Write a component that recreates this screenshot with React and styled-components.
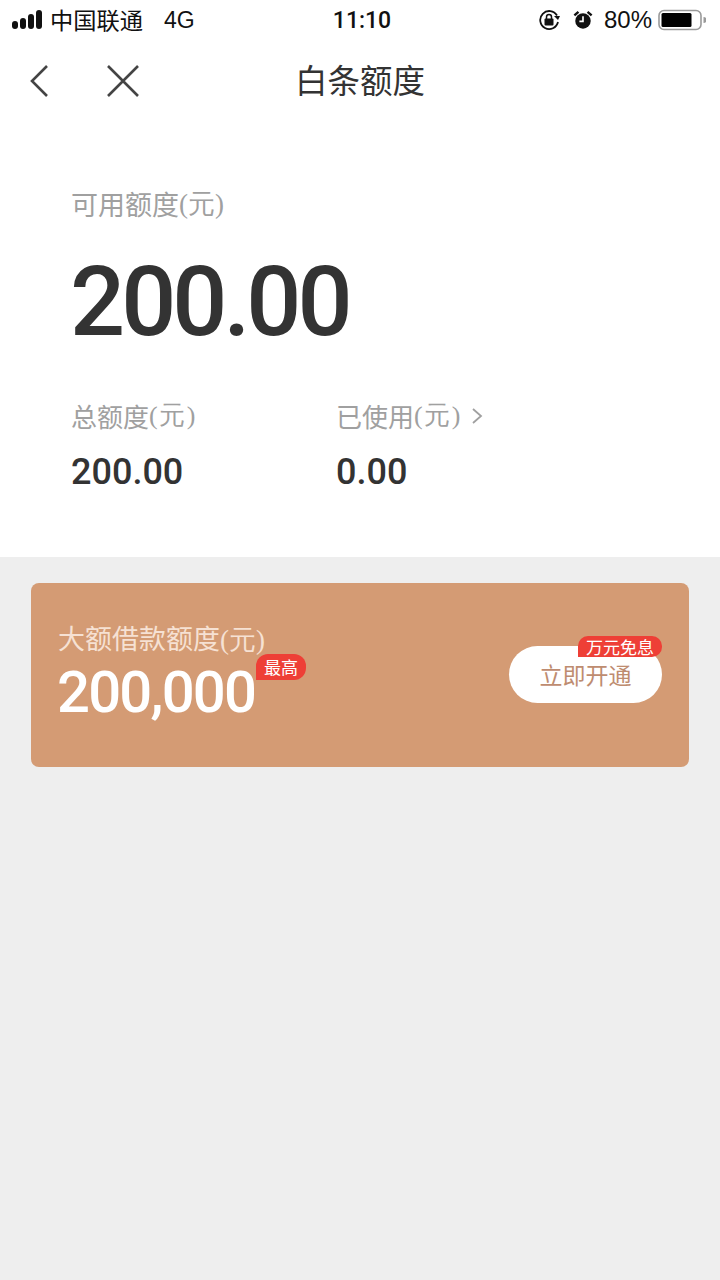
import React from "react";
import styled, { createGlobalStyle } from "styled-components";

const GlobalStyle = createGlobalStyle`
  html, body {
    margin: 0;
    padding: 0;
    background: #eeeeee;
  }
  body {
    font-family: "Noto Sans CJK SC", "Noto Sans", sans-serif;
  }
`;

const Page = styled.div`
  width: 720px;
  height: 1280px;
  background: #eeeeee;
  display: flex;
  flex-direction: column;
  overflow: hidden;
`;

const Top = styled.div`
  height: 557px;
  background: #ffffff;
  display: flex;
  flex-direction: column;
`;

const StatusBar = styled.div`
  height: 40px;
  padding: 0 14px 0 12px;
  display: flex;
  align-items: center;
  justify-content: space-between;
  position: relative;
  color: #111;
  font-size: 23px;
`;

const StatusGroup = styled.div`
  display: flex;
  align-items: center;
`;

const Signal = styled.div`
  display: flex;
  align-items: flex-end;
  gap: 2px;
  margin: 0 8px 2px 0;
`;

const SignalBar = styled.span`
  width: 6px;
  height: ${(p) => p.$h}px;
  border-radius: 3px;
  background: #111;
`;

const Carrier = styled.span`
  font-size: 23.25px;
  line-height: 40px;
  margin-bottom: 3px;
`;

const Network = styled.span`
  margin-left: 21px;
  font-family: "Liberation Sans", sans-serif;
  font-size: 23px;
`;

const Clock = styled.span`
  position: absolute;
  left: 4px;
  right: 0;
  text-align: center;
  font-family: "Roboto", sans-serif;
  font-weight: 500;
  font-size: 23px;
`;

const Percent = styled.span`
  margin: 0 6px 0 11px;
  font-family: "Liberation Sans", sans-serif;
  font-size: 24px;
`;

const NavBar = styled.div`
  height: 82px;
  padding: 0 0 0 29px;
  display: flex;
  align-items: center;
  position: relative;
`;

const NavIcon = styled.svg`
  display: block;
  margin-right: ${(p) => p.$gap || 0}px;
`;

const NavTitle = styled.div`
  position: absolute;
  left: 0;
  right: 0;
  top: 17px;
  text-align: center;
  font-size: 32.5px;
  line-height: 44px;
  color: #333333;
`;

const Summary = styled.div`
  padding: 64px 0 0 71px;
`;

const Label = styled.div`
  color: #a0a0a0;
  font-size: ${(p) => p.$size || 26}px;
  line-height: 36px;
  display: flex;
  align-items: center;
  white-space: nowrap;

  i {
    font-style: normal;
    font-family: "Liberation Serif", serif;
    letter-spacing: ${(p) => (p.$size ? 0 : 1.5)}px;
  }
`;

const Amount = styled.div`
  color: #333333;
  font-family: "Roboto", sans-serif;
  font-weight: 500;
  font-size: 97px;
  line-height: 100px;
  letter-spacing: -4px;
  margin: 30px 0 0 -1px;
`;

const Stats = styled.div`
  display: flex;
  margin-top: 46px;
`;

const Stat = styled.div`
  width: 265px;
`;

const StatValue = styled.div`
  color: #333333;
  font-family: "Roboto", sans-serif;
  font-weight: 500;
  font-size: 36px;
  line-height: 44px;
  margin-top: 16px;
`;

const Card = styled.div`
  margin: 26px 31px 0;
  height: 184px;
  box-sizing: border-box;
  padding: 0 27px;
  background: #d49b74;
  border-radius: 8px;
  display: flex;
  align-items: center;
  justify-content: space-between;
`;

const CardLeft = styled.div`
  position: relative;
  margin-top: -4px;
`;

const CardLabel = styled.div`
  color: #f6e1d3;
  font-size: 27px;
  line-height: 36px;
  margin-top: -3px;
  white-space: nowrap;

  i {
    font-style: normal;
    font-family: "Liberation Serif", serif;
  }
`;

const CardAmount = styled.div`
  color: #ffffff;
  font-family: "Roboto", sans-serif;
  font-weight: 500;
  font-size: 58px;
  line-height: 62px;
  letter-spacing: -1.8px;
  margin: 3px 0 0 -1px;
`;

const Tag = styled.span`
  position: absolute;
  background: #ee3f36;
  color: #ffffff;
  white-space: nowrap;
  text-align: center;
  font-size: 17px;
`;

const HighTag = styled(Tag)`
  left: 198px;
  top: 31px;
  width: 50px;
  height: 26px;
  line-height: 26px;
  border-radius: 12px 12px 12px 0;
`;

const OpenButton = styled.div`
  position: relative;
  width: 153px;
  height: 57px;
  line-height: 57px;
  margin-top: -2px;
  border-radius: 29px;
  background: #ffffff;
  color: #be8c70;
  text-align: center;
  font-size: 23px;
`;

const FreeTag = styled(Tag)`
  right: 0;
  top: -10px;
  width: 84px;
  height: 21px;
  line-height: 21px;
  border-radius: 10px 10px 10px 0;
`;

export default function App() {
  return (
    <Page>
      <GlobalStyle />
      <Top>
        <StatusBar>
          <StatusGroup>
            <Signal>
              <SignalBar $h={8} />
              <SignalBar $h={11} />
              <SignalBar $h={15} />
              <SignalBar $h={19} />
            </Signal>
            <Carrier>中国联通</Carrier>
            <Network>4G</Network>
          </StatusGroup>
          <Clock>11:10</Clock>
          <StatusGroup>
            <svg width="24" height="22" viewBox="0 0 24 22">
              <path d="M20 13a9 9 0 1 1-1-6.5" fill="none" stroke="#111" strokeWidth="1.8" />
              <path d="M16 7h6l-2 4z" fill="#111" />
              <rect x="6.5" y="9.5" width="9" height="7" rx="1" fill="#111" />
              <path d="M8.5 10V8a2.5 2.5 0 0 1 5 0v2" fill="none" stroke="#111" strokeWidth="1.5" />
            </svg>
            <svg width="20" height="22" viewBox="0 0 22 22" style={{ marginLeft: 11 }}>
              <circle cx="11" cy="12" r="8.5" fill="#111" />
              <path d="M11 7v5.5H7" fill="none" stroke="#fff" strokeWidth="1.8" />
              <path d="M1.5 6 L6 2 M20.5 6 L16 2" stroke="#111" strokeWidth="2.6" />
            </svg>
            <Percent>80%</Percent>
            <svg width="48" height="22" viewBox="0 0 48 22">
              <rect x="1" y="1.5" width="42" height="19" rx="5" fill="none" stroke="#9a9a9a" strokeWidth="1.6" />
              <rect x="3.5" y="4" width="30" height="14" rx="1.5" fill="#000" />
              <path d="M45.5 8a3 3 0 0 1 0 6z" fill="#9a9a9a" />
            </svg>
          </StatusGroup>
        </StatusBar>
        <NavBar>
          <NavIcon $gap={55} width="22" height="36" viewBox="0 0 22 36">
            <path d="M18 3 L3 18 L18 33" fill="none" stroke="#444" strokeWidth="2.6" />
          </NavIcon>
          <NavIcon width="34" height="34" viewBox="0 0 34 34">
            <path d="M2 2 L32 32 M32 2 L2 32" fill="none" stroke="#444" strokeWidth="2.6" />
          </NavIcon>
          <NavTitle>白条额度</NavTitle>
        </NavBar>
        <Summary>
          <Label $size={27}>可用额度<i>(元)</i></Label>
          <Amount>200.00</Amount>
          <Stats>
            <Stat>
              <Label>总额度<i>(元)</i></Label>
              <StatValue>200.00</StatValue>
            </Stat>
            <Stat>
              <Label>
                已使用<i>(元)</i>
                <svg width="12" height="20" viewBox="0 0 12 20" style={{ marginLeft: 9 }}>
                  <path d="M2 3 L10 10 L2 17" fill="none" stroke="#a0a0a0" strokeWidth="1.8" />
                </svg>
              </Label>
              <StatValue>0.00</StatValue>
            </Stat>
          </Stats>
        </Summary>
      </Top>
      <Card>
        <CardLeft>
          <CardLabel>大额借款额度<i>(元)</i></CardLabel>
          <CardAmount>200,000</CardAmount>
          <HighTag>最高</HighTag>
        </CardLeft>
        <OpenButton>
          立即开通
          <FreeTag>万元免息</FreeTag>
        </OpenButton>
      </Card>
    </Page>
  );
}
